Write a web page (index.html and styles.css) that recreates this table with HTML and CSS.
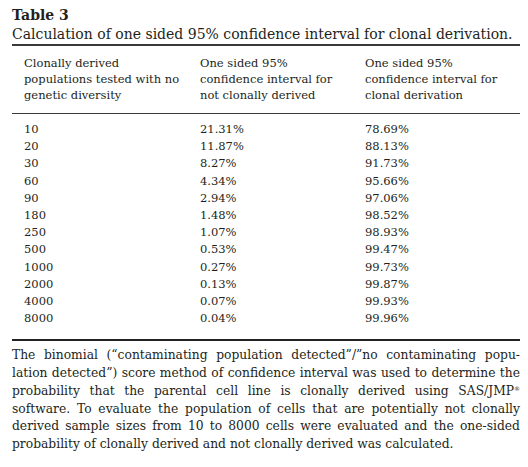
FILE: index.html
```html
<!DOCTYPE html>
<html lang="en">
<head>
    <meta charset="UTF-8">
    <title>Table 3</title>
    <link rel="stylesheet" href="styles.css">
</head>
<body>
    <div class="table-wrap">
        <div class="table-label">Table 3</div>
        <div class="table-caption">Calculation of one sided 95% confidence interval for clonal derivation.</div>
        <table class="data">
            <thead>
                <tr>
                    <th>Clonally derived<br>populations tested with no<br>genetic diversity</th>
                    <th>One sided 95%<br>confidence interval for<br>not clonally derived</th>
                    <th>One sided 95%<br>confidence interval for<br>clonal derivation</th>
                </tr>
            </thead>
            <tbody>
                <tr><td>10</td><td>21.31%</td><td>78.69%</td></tr>
                <tr><td>20</td><td>11.87%</td><td>88.13%</td></tr>
                <tr><td>30</td><td>8.27%</td><td>91.73%</td></tr>
                <tr><td>60</td><td>4.34%</td><td>95.66%</td></tr>
                <tr><td>90</td><td>2.94%</td><td>97.06%</td></tr>
                <tr><td>180</td><td>1.48%</td><td>98.52%</td></tr>
                <tr><td>250</td><td>1.07%</td><td>98.93%</td></tr>
                <tr><td>500</td><td>0.53%</td><td>99.47%</td></tr>
                <tr><td>1000</td><td>0.27%</td><td>99.73%</td></tr>
                <tr><td>2000</td><td>0.13%</td><td>99.87%</td></tr>
                <tr><td>4000</td><td>0.07%</td><td>99.93%</td></tr>
                <tr><td>8000</td><td>0.04%</td><td>99.96%</td></tr>
            </tbody>
        </table>
        <p class="table-note">
            <span class="line">The binomial (“contaminating population detected”/”no contaminating popu-</span>
            <span class="line">lation detected”) score method of confidence interval was used to determine the</span>
            <span class="line">probability that the parental cell line is clonally derived using SAS/JMP<sup>®</sup></span>
            <span class="line">software. To evaluate the population of cells that are potentially not clonally</span>
            <span class="line">derived sample sizes from 10 to 8000 cells were evaluated and the one-sided</span>
            <span class="line">probability of clonally derived and not clonally derived was calculated.</span>
        </p>
    </div>
</body>
</html>
```

FILE: styles.css
```css
body {
    margin: 0;
    background-color: #fff;
    color: #231f20;
    font-family: "DejaVu Serif", "Liberation Serif", serif;
}

.table-wrap {
    width: 508px;
    padding: 6px 0 0 12px;
}

.table-label {
    font-weight: bold;
    font-size: 14px;
    line-height: 18px;
}

.table-caption {
    font-size: 14px;
    line-height: 20px;
    border-bottom: 2px solid #3a3a3a;
}

.data {
    width: 100%;
    border-collapse: collapse;
    font-size: 11.5px;
}

.data th {
    font-weight: normal;
    text-align: left;
    vertical-align: top;
    line-height: 16px;
    padding: 9px 0 10px 12px;
    border-bottom: 1.5px solid #3a3a3a;
}

.data th:nth-child(1) {
    width: 164px;
}

.data th:nth-child(2) {
    width: 153px;
}

.data td {
    line-height: 17.2px;
    padding: 0 0 0 12px;
}

.data tbody tr:first-child td {
    padding-top: 7px;
}

.data tbody tr:last-child td {
    padding-bottom: 12px;
}

.data tbody tr:last-child {
    border-bottom: 2px solid #222;
}

.table-note {
    margin: 6px 0 0;
    font-size: 12.3px;
    line-height: 17.7px;
}

.table-note .line {
    display: block;
    white-space: nowrap;
    text-align: justify;
    text-align-last: justify;
}

.table-note .line:last-child {
    text-align-last: left;
}

.table-note sup {
    font-size: 6px;
    line-height: 0;
    vertical-align: 4px;
}
```
